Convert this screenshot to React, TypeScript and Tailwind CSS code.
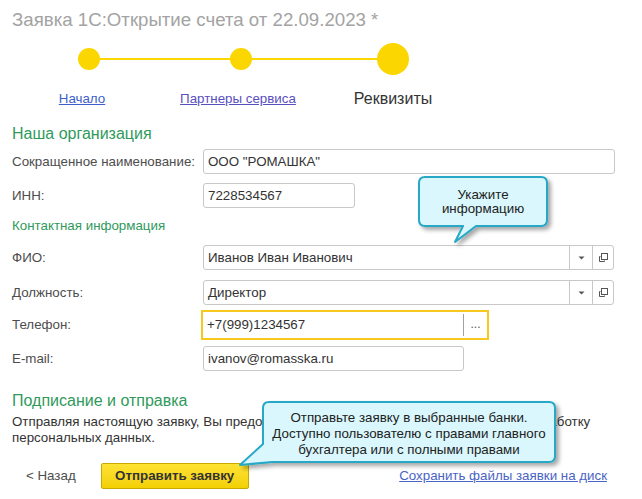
import React from "react";

const font = { fontFamily: '"Liberation Sans", Arial, sans-serif' };

function CopyIcon() {
  return (
    <svg width="12" height="12" viewBox="0 0 12 12" fill="none" stroke="#555" strokeWidth="1">
      <rect x="4.5" y="1.5" width="6" height="6" />
      <path d="M2.5 4.5 V9.5 H7.5" />
      <path d="M2.5 4.5 H3.5" />
      <path d="M7.5 9.5 V8.5" />
    </svg>
  );
}

function Arrow() {
  return (
    <svg width="7" height="4" viewBox="0 0 7 4">
      <path d="M0.5 0.5 H6.5 L3.5 3.5 Z" fill="#555" />
    </svg>
  );
}

function Row({ label, children, className = "" }: { label: string; children: React.ReactNode; className?: string }) {
  return (
    <div className={"flex items-center " + className}>
      <div className="w-[191px] shrink-0 text-[13.33px] text-[#4d4d4d] leading-[16px]">{label}</div>
      {children}
    </div>
  );
}

function Input({ value, w }: { value: string; w: string }) {
  return (
    <div className={"h-[25px] border border-[#c8c8c8] rounded-[3px] flex items-center px-[4px] text-[13.33px] text-[#333] " + w}>
      {value}
    </div>
  );
}

function Combo({ value }: { value: string }) {
  return (
    <div className="h-[25px] w-[411px] border border-[#c8c8c8] rounded-[3px] flex items-stretch text-[13.33px] text-[#333]">
      <div className="flex-1 flex items-center px-[4px]">{value}</div>
      <div className="w-[23px] border-l border-[#c8c8c8] flex items-center justify-center">
        <Arrow />
      </div>
      <div className="w-[21px] border-l border-[#c8c8c8] flex items-center justify-center">
        <CopyIcon />
      </div>
    </div>
  );
}

export default function App() {
  return (
    <div className="relative w-[642px] h-[499px] bg-white overflow-hidden" style={font}>
      <div className="pt-[9px] px-[12px] text-[18.67px] leading-[21px] text-[#a3a3a3]">
        Заявка 1С:Открытие счета от 22.09.2023 *
      </div>

      <div className="relative ml-[13px] mt-[13px] w-[456px]">
        <div className="absolute left-[76px] top-[15px] w-[304px] h-[2px] bg-[#fcd600]" />
        <div className="relative grid grid-cols-[152px_152px_152px]">
          <div className="h-[32px] flex items-center justify-center">
            <div className="w-[22px] h-[22px] rounded-full bg-[#fcd600]" />
          </div>
          <div className="h-[32px] flex items-center justify-center">
            <div className="w-[22px] h-[22px] rounded-full bg-[#fcd600]" />
          </div>
          <div className="h-[32px] flex items-center justify-center">
            <div className="w-[32px] h-[32px] rounded-full bg-[#fcd600]" />
          </div>
        </div>
        <div className="grid grid-cols-[152px_152px_152px] mt-[16px] items-center">
          <div className="flex justify-center">
            <span className="text-[13.33px] leading-[16px] text-[#3d5fc9] underline mr-[14px]">Начало</span>
          </div>
          <div className="flex justify-center">
            <span className="text-[13.33px] leading-[16px] text-[#5a4fbf] underline mr-[6px]">Партнеры сервиса</span>
          </div>
          <div className="flex justify-center">
            <span className="text-[16px] leading-[16px] text-[#333]">Реквизиты</span>
          </div>
        </div>
      </div>

      <div className="px-[12px]">
        <div className="mt-[17px] text-[16px] leading-[20px] text-[#2f9a5c]">Наша организация</div>

        <Row label="Сокращенное наименование:" className="mt-[5px]">
          <Input value='ООО "РОМАШКА"' w="w-[412px]" />
        </Row>
        <Row label="ИНН:" className="mt-[9px]">
          <Input value="7228534567" w="w-[152px]" />
        </Row>

        <div className="mt-[10px] text-[13.33px] leading-[16px] text-[#2f9a5c]">Контактная информация</div>

        <Row label="ФИО:" className="mt-[11px]">
          <Combo value="Иванов Иван Иванович" />
        </Row>
        <Row label="Должность:" className="mt-[10px]">
          <Combo value="Директор" />
        </Row>
        <Row label="Телефон:" className="mt-[5px]">
          <div className="-ml-[2px] h-[30px] w-[288px] border-2 border-[#f7c81e] flex items-stretch text-[13.33px] text-[#333]">
            <div className="flex-1 flex items-center px-[4px]">+7(999)1234567</div>
            <div className="my-[2px] w-[1px] bg-[#a0a0a0]" />
            <div className="w-[23px] flex items-center justify-center text-[#555] text-[12px] leading-[12px] pb-[2px]">...</div>
          </div>
        </Row>
        <Row label="E-mail:" className="mt-[6px]">
          <Input value="ivanov@romasska.ru" w="w-[261px]" />
        </Row>

        <div className="mt-[20px] text-[16px] leading-[20px] text-[#2f9a5c]">Подписание и отправка</div>
        <div className="mt-[3px] w-[600px] text-[13.33px] leading-[16px] text-[#333]">
          Отправляя настоящую заявку, Вы предоставляете банкам согласие на передачу и обработку персональных данных.
        </div>

        <div className="mt-[17px] flex items-center">
          <span className="ml-[14px] text-[13.33px] text-[#4d4d4d]">&lt; Назад</span>
          <div className="ml-[25px] h-[26px] w-[148px] rounded-[2px] border border-[#c9a900] bg-gradient-to-b from-[#ffe332] to-[#f3d000] flex items-center justify-center text-[13.33px] font-bold text-[#333]">
            Отправить заявку
          </div>
          <span className="ml-auto mr-[23px] text-[13.33px] text-[#4a64c4] underline">Сохранить файлы заявки на диск</span>
        </div>
      </div>

      {/* Tooltip 1 */}
      <div className="absolute left-[410px] top-[170px] w-[150px] h-[80px]">
        <svg width="150" height="80" viewBox="0 0 150 80" className="absolute inset-0">
          <defs>
            <filter id="sh1" x="-20%" y="-20%" width="140%" height="150%">
              <feDropShadow dx="3" dy="3" stdDeviation="2" floodColor="#000" floodOpacity="0.35" />
            </filter>
          </defs>
          <path
            d="M15 7 H131 Q137 7 137 13 V50 Q137 56 131 56 H66 L45 72 L53 56 H15 Q9 56 9 50 V13 Q9 7 15 7 Z"
            fill="#d9f7fd"
            stroke="#25a8c6"
            strokeWidth="2"
            strokeLinejoin="round"
            filter="url(#sh1)"
          />
        </svg>
        <div className="absolute left-[9px] top-[18px] w-[128px] text-center text-[13.33px] leading-[14px] text-[#222]">
          Укажите
          <br />
          информацию
        </div>
      </div>

      {/* Tooltip 2 */}
      <div className="absolute left-[230px] top-[395px] w-[335px] h-[80px]">
        <svg width="335" height="80" viewBox="0 0 335 80" className="absolute inset-0">
          <defs>
            <filter id="sh2" x="-10%" y="-20%" width="120%" height="150%">
              <feDropShadow dx="3" dy="3" stdDeviation="2" floodColor="#000" floodOpacity="0.35" />
            </filter>
          </defs>
          <path
            d="M39 7 H319 Q325 7 325 13 V61 Q325 67 319 67 H42 L10 70 L33 49 V13 Q33 7 39 7 Z"
            fill="#d9f7fd"
            stroke="#25a8c6"
            strokeWidth="2"
            strokeLinejoin="round"
            filter="url(#sh2)"
          />
        </svg>
        <div className="absolute left-[33px] top-[15px] w-[292px] text-center text-[13.33px] leading-[16px] text-[#222]">
          Отправьте заявку в выбранные банки.
          <br />
          Доступно пользователю с правами главного
          <br />
          бухгалтера или с полными правами
        </div>
      </div>
    </div>
  );
}
